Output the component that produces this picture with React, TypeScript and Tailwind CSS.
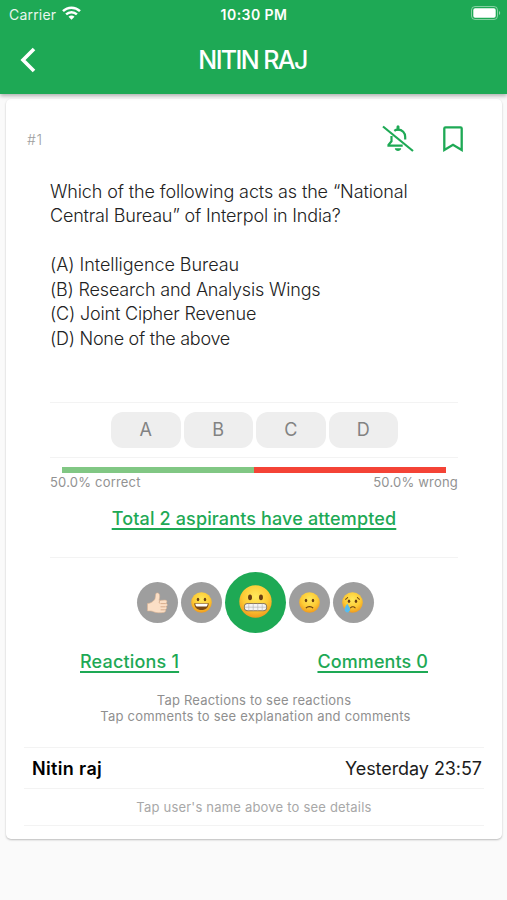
import type { ReactNode } from 'react';

const questionLines = [
  { text: 'Which of the following acts as the “National', className: 'tracking-[-0.12px]' },
  { text: 'Central Bureau” of Interpol in India?', className: 'tracking-[-0.17px]' },
  { text: '', className: '' },
  { text: '(A) Intelligence Bureau', className: 'tracking-[-0.05px]' },
  { text: '(B) Research and Analysis Wings', className: 'tracking-[-0.18px]' },
  { text: '(C) Joint Cipher Revenue', className: 'tracking-[-0.18px]' },
  { text: '(D) None of the above', className: 'tracking-[-0.26px]' },
];

const options = ['A', 'B', 'C', 'D'];

function StatusBar() {
  return (
    <div className="grid h-7 grid-cols-3 items-center pl-[9px] pr-[6px] text-[14px]">
      <div className="flex items-center gap-[6px]">
        <span className="tracking-[0.2px] opacity-90">Carrier</span>
        <svg viewBox="0 0 19 14" className="-mt-[2px] h-[14px] w-[19px]" fill="none" stroke="white" strokeWidth="2.5">
          <path d="M1 5.2C5.8.5 13.2.5 18 5.2" />
          <path d="M4.1 8.4c3.1-2.9 7.7-2.9 10.8 0" />
          <path d="M9.5 13.8 6.5 10.8c1.700-1.600 4.300-1.600 6 0Z" fill="white" stroke="none" />
        </svg>
      </div>
      <span className="-ml-[2px] text-center font-semibold tracking-[0.45px] whitespace-nowrap">10:30 PM</span>
      <svg viewBox="0 0 30 14" className="-mt-[2px] h-[14px] w-[30px] justify-self-end" fill="none">
        <rect x="0.5" y="0.5" width="26" height="13" rx="3.5" stroke="white" strokeOpacity="0.45" />
        <rect x="2.3" y="2.3" width="22.4" height="9.4" rx="1.8" fill="white" />
        <path d="M28 5v4c1.600-.8 1.600-3.200 0-4Z" fill="white" fillOpacity="0.5" />
      </svg>
    </div>
  );
}

function Header() {
  return (
    <header className="relative z-10 h-[94px] bg-[#1ea955] text-white shadow-[0_2px_4px_rgba(0,0,0,0.3)]">
      <StatusBar />
      <div className="grid h-[64px] grid-cols-[100px_1fr_100px] items-center">
        <svg viewBox="0 0 16 26" className="ml-[20px] h-[26px] w-[16px]" fill="none" stroke="white" strokeWidth="3.6">
          <path d="M14 2 3 13l11 11" />
        </svg>
        <h1 className="pt-[1px] pr-[2px] text-center text-[25px] font-medium tracking-[-1.6px]">NITIN RAJ</h1>
      </div>
    </header>
  );
}

function BellOffIcon() {
  return (
    <svg viewBox="0 0 32 28" className="h-[28px] w-[32px]" fill="none" stroke="#1ea955" strokeWidth="2.2">
      <path d="M1 1.500 31 26" />
      <path d="M12.300 5.800c1-.8 1.900-1.200 3.700-1.200 4.300 0 7.200 3.300 7.200 7.200v2.700" />
      <path d="M16 1.800v2.400" strokeWidth="3" strokeLinecap="round" />
      <path d="M9.500 11v5.300l-3 3.600v.8h14.200" />
      <path d="M12.800 23.200h6.400c-.3 3.600-6.100 3.600-6.400 0Z" fill="#1ea955" stroke="none" />
    </svg>
  );
}

function BookmarkIcon() {
  return (
    <svg viewBox="0 0 20 26" className="h-[26px] w-[20px]" fill="none" stroke="#1ea955" strokeWidth="2.3">
      <path d="M1.300 24V2.500c0-.8.4-1.200 1.200-1.200h15c.8 0 1.200.4 1.200 1.200V24L10 18.800Z" />
    </svg>
  );
}

function ThumbsUp() {
  return (
    <svg viewBox="0 0 24 24" className="size-[24px]">
      <path
        d="M2.500 12.500c2.500-.2 5.200-1.200 7-3.700 1-1.500.8-3.600 1.200-5.600.3-1.900 3.300-1.700 3.800.5.4 2-.1 3.900-.5 5.700l6-.3c2.200 0 2.500 2.500.9 3.200 2 .5 1.800 2.900-.1 3.300 1.400.6 1.100 2.700-.6 3 1 1 .3 2.600-1.500 2.800-3.400.6-7.400.6-10.200-.7-1.700-.8-3.300-.8-6-.8Z"
        fill="#fbdfc6"
        stroke="#dcb392"
        strokeWidth="0.6"
      />
      <path d="M15.500 12.600h5.300M15.500 15.800h5M15.600 18.800h4.200M15.300 9.500c-1.300 1-1.300 2.200-.6 3" fill="none" stroke="#cf9f7e" strokeWidth="0.8" />
    </svg>
  );
}

function Face({ className, children }: { className: string; children: ReactNode }) {
  return (
    <svg viewBox="0 0 32 32" className={className}>
      <defs>
        <radialGradient id="face" cx="0.5" cy="0.35" r="0.65">
          <stop offset="0" stopColor="#ffe95c" />
          <stop offset="0.6" stopColor="#fdcb35" />
          <stop offset="1" stopColor="#f09a1d" />
        </radialGradient>
      </defs>
      <circle cx="16" cy="16" r="15.7" fill="url(#face)" />
      {children}
    </svg>
  );
}

function Eyes({ y }: { y: number }) {
  return (
    <g fill="#6b3f12">
      <ellipse cx="10.7" cy={y} rx="1.9" ry="2.7" />
      <ellipse cx="21.3" cy={y} rx="1.9" ry="2.7" />
    </g>
  );
}

function Reaction({ children }: { children: ReactNode }) {
  return <div className="flex size-[41px] shrink-0 items-center justify-center rounded-full bg-[#9e9e9e]">{children}</div>;
}

function Reactions() {
  return (
    <div className="flex items-center justify-center gap-[3px] pl-[2px]">
      <Reaction>
        <ThumbsUp />
      </Reaction>
      <Reaction>
        <Face className="size-[21px]">
          <Eyes y={11.5} />
          <path d="M5 17h22c0 6-4.500 10.500-11 10.500S5 23 5 17Z" fill="#7a4a17" />
          <path d="M6.500 17.800h19c-.2 2.300-1.100 3.700-2 4.200h-15c-1.100-.8-1.800-2.200-2-4.200Z" fill="white" />
        </Face>
      </Reaction>
      <div className="flex size-[61px] items-center justify-center rounded-full bg-[#1ea955]">
        <Face className="-mt-[2px] size-[33px]">
          <Eyes y={12} />
          <rect x="5.2" y="18" width="21.6" height="7" rx="3.2" fill="#f4f4f4" stroke="#8d7a5c" />
          <path d="M5.500 21.500h21M9.500 18v7M13.800 18v7M18.200 18v7M22.500 18v7" stroke="#b3b3b3" strokeWidth="0.6" />
        </Face>
      </div>
      <Reaction>
        <Face className="size-[21px]">
          <Eyes y={13} />
          <path d="M10.500 24.500c2.500-3 8.500-3 11 0" fill="none" stroke="#6b3f12" strokeWidth="1.8" />
        </Face>
      </Reaction>
      <Reaction>
        <Face className="-ml-[2px] size-[21px]">
          <Eyes y={14} />
          <path d="M5 11.500c1.500-.8 3-2 3.800-3.700M27 11.500c-1.500-.8-3-2-3.800-3.700M12.500 24.500c2.500-2.500 5.500-2.500 8 0" fill="none" stroke="#6b3f12" strokeWidth="1.6" />
          <path d="M8 18c-2.700 4-4 6.500-4 8.800 0 5.700 8.400 5.700 8.400 0 0-2.300-1.700-4.800-4.400-8.800Z" fill="#55bdf0" />
        </Face>
      </Reaction>
    </div>
  );
}

function QuestionCard() {
  return (
    <article className="h-[740px] rounded-[5px] bg-white shadow-[0_1px_2px_rgba(0,0,0,0.25)]">
      <div className="flex h-[80px] items-center pl-[21px] pr-[39px] text-[#9e9e9e]">
        <span className="flex-1 pt-[1px] text-[14px] font-light tracking-[0.6px]">#1</span>
        <BellOffIcon />
        <div className="ml-[29px]">
          <BookmarkIcon />
        </div>
      </div>

      <div className="px-[44px]">
        <div className="h-[223px] pt-[0.5px] text-[18px] leading-[24.5px] font-light whitespace-nowrap text-[#222]">
          {questionLines.map((line, i) => (
            <p key={i} className="h-[24.5px]">
              <span className={line.className}>{line.text}</span>
            </p>
          ))}
        </div>

        <div className="flex h-[56px] items-center justify-center gap-[3px] border-y border-[#f3f3f3] pb-[1px] pl-[1px]">
          {options.map((option) => (
            <button key={option} className="h-[36px] w-[69.5px] rounded-[12px] bg-[#eeeeee] text-[18px] text-[#828282]">
              {option}
            </button>
          ))}
        </div>

        <div className="mx-[12px] mt-[9px] flex h-[6px]">
          <div className="flex-1 bg-[#81c784]" />
          <div className="flex-1 bg-[#f44336]" />
        </div>
        <div className="flex h-[19px] items-center justify-between text-[13px] text-[#929292]">
          <span className="tracking-[0.2px]">50.0% correct</span>
          <span className="tracking-[0.2px]">50.0% wrong</span>
        </div>

        <div className="flex h-[66px] justify-center border-b border-[#f3f3f3] pt-[15px] text-[18px] leading-[24px] font-medium text-[#1ea955]">
          <a className="h-[20px] tracking-[0.14px] whitespace-nowrap underline decoration-[1.5px] underline-offset-[3px] [text-decoration-skip-ink:none]">
            Total 2 aspirants have attempted
          </a>
        </div>
      </div>

      <div className="pt-[14px]">
        <Reactions />
      </div>

      <div className="flex justify-between pt-[17px] pr-[74px] pl-[74px] text-[18px] leading-[24px] font-medium text-[#1ea955]">
        <a className="tracking-[0.18px] underline decoration-[1.5px] underline-offset-[3px]">Reactions 1</a>
        <a className="tracking-[0.1px] underline decoration-[1.5px] underline-offset-[3px]">Comments 0</a>
      </div>

      <div className="mt-[18px] h-[55px] text-center text-[13px] leading-[16px] text-[#8f8f8f]">
        <p className="tracking-[0.2px]">Tap Reactions to see reactions</p>
        <p className="pl-[3px] tracking-[0.22px]">Tap comments to see explanation and comments</p>
      </div>

      <div className="mx-[18px]">
        <div className="flex h-[42px] items-center justify-between border-y border-[#f3f3f3] pr-[2px] pl-[8px] text-[18px] text-[#1c1c1c]">
          <span className="font-semibold tracking-[0.35px] text-black">Nitin raj</span>
          <span className="tracking-[-0.06px]">Yesterday 23:57</span>
        </div>
        <div className="flex h-[37px] items-center justify-center border-b border-[#f3f3f3] pt-[1px] text-[13px] text-[#a8a8a8]">
          <span className="tracking-[0.2px]">Tap user's name above to see details</span>
        </div>
      </div>
    </article>
  );
}

export default function App() {
  return (
    <div className="h-[900px] w-[507px] overflow-hidden bg-[#fafafa] font-['Inter',sans-serif]">
      <Header />
      <main className="pt-[5px] pr-[5px] pl-[6px]">
        <QuestionCard />
      </main>
    </div>
  );
}
